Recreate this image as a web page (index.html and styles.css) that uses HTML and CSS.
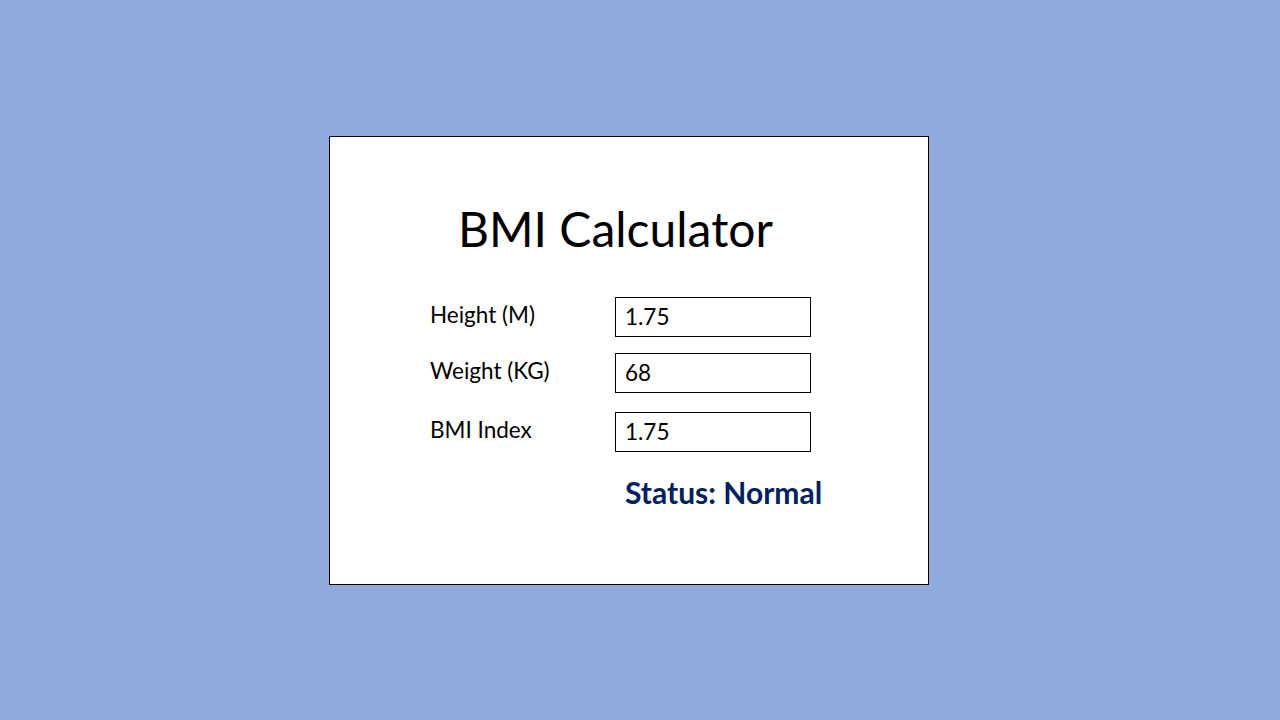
FILE: index.html
```html
<!DOCTYPE html>
<html>
<head>
<meta charset="utf-8">
<link rel="stylesheet" href="styles.css">
</head>
<body>
<div class="card">
  <h1 class="title">BMI Calculator</h1>
  <div class="form">
    <div class="row"><span class="label">Height (M)</span><div class="box">1.75</div></div>
    <div class="row"><span class="label">Weight (KG)</span><div class="box">68</div></div>
    <div class="row row-last"><span class="label">BMI Index</span><div class="box">1.75</div></div>
  </div>
  <div class="status">Status: Normal</div>
</div>
</body>
</html>
```
FILE: styles.css
```css
html, body {
  margin: 0;
  padding: 0;
}
body {
  background: #8faadc;
  width: 1280px;
  height: 720px;
  overflow: hidden;
  font-family: Lato, "Open Sans", sans-serif;
  color: #000;
}
.card {
  box-sizing: border-box;
  margin: 136px 0 0 329px;
  width: 600px;
  height: 449px;
  background: #fff;
  border: 1px solid #000;
  display: flex;
  flex-direction: column;
}
.title {
  margin: 64px 0 0 128px;
  font-size: 48px;
  font-weight: 400;
  line-height: 56px;
}
.form {
  margin: 40px 0 0 100px;
  display: flex;
  flex-direction: column;
  gap: 16px;
}
.row {
  display: flex;
  align-items: center;
}
.row-last {
  margin-top: 3px;
}
.label {
  width: 185px;
  font-size: 22.5px;
  line-height: 28px;
  margin-top: -4px;
}
.box {
  box-sizing: border-box;
  width: 196px;
  height: 40px;
  border: 1px solid #000;
  padding-left: 9px;
  font-size: 22.5px;
  line-height: 37px;
}
.status {
  margin: 22px 0 0 295px;
  font-size: 30px;
  font-weight: 700;
  color: #002060;
}
```
